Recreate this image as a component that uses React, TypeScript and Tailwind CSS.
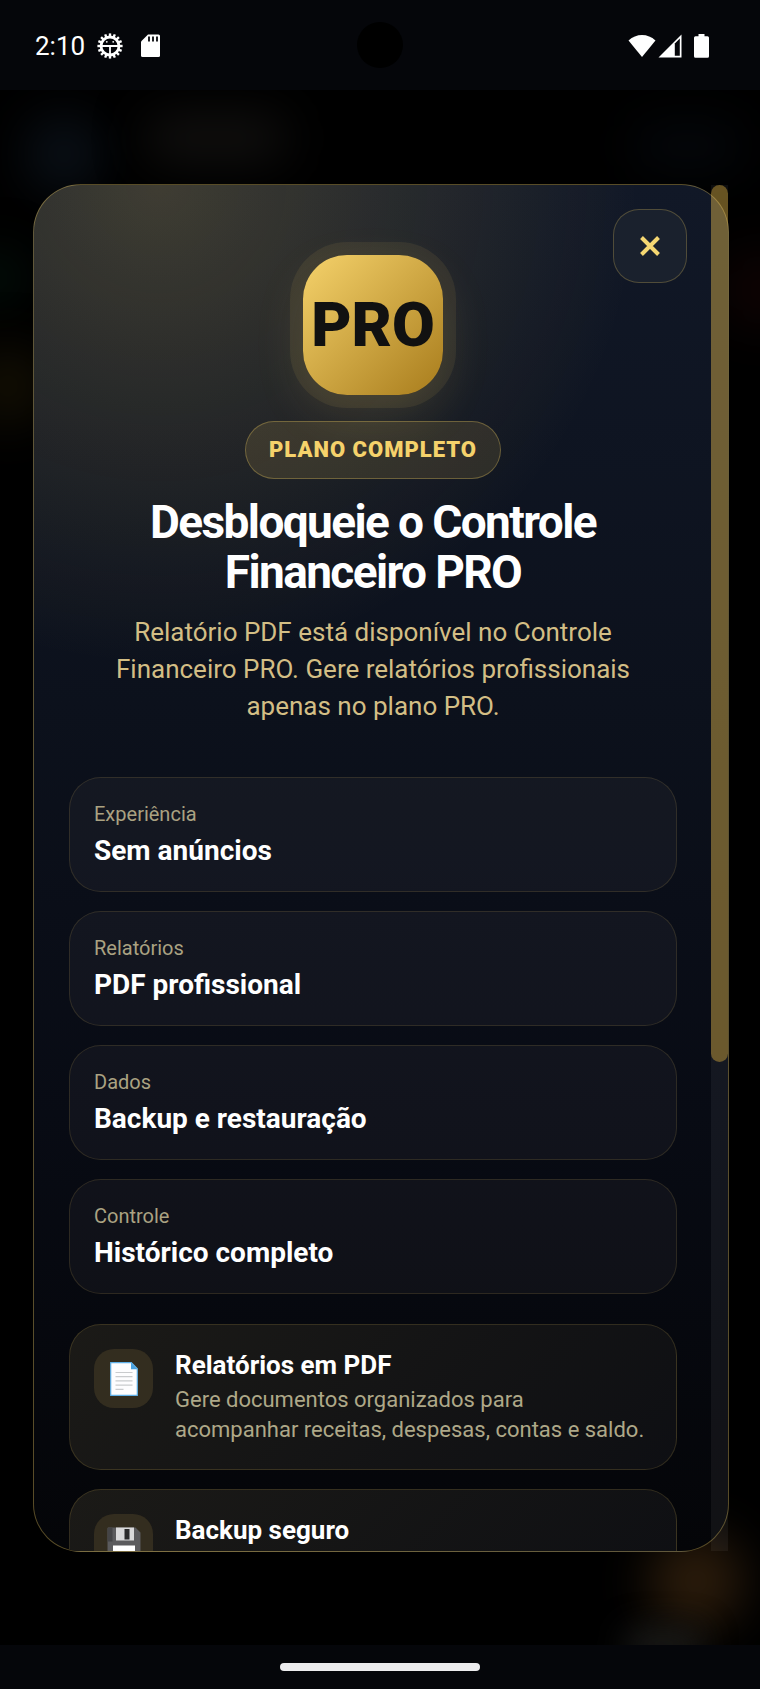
import * as React from "react"

type Stat = { label: string; value: string }

type Feature = {
  title: string
  description?: string
  icon: React.ReactNode
}

const STATS: Stat[] = [
  { label: "Experiência", value: "Sem anúncios" },
  { label: "Relatórios", value: "PDF profissional" },
  { label: "Dados", value: "Backup e restauração" },
  { label: "Controle", value: "Histórico completo" },
]

function PageIcon() {
  return (
    <svg viewBox="0 0 28 34" className="h-[34px] w-7" aria-hidden="true">
      <path d="M.7.7h20.6l6 6v26.6H.7z" fill="#fdfdfe" stroke="#5fb0e8" strokeWidth="1.2" />
      <path d="M21 .6l6.5 6.6H21z" fill="#4aa3e0" />
      <path d="M5.5 10.5h17M5.5 14.7h17M5.5 18.9h17M5.5 23.1h17M5.5 27.3h8" stroke="#c9cbcd" strokeWidth="1.2" />
    </svg>
  )
}

function FloppyIcon() {
  return (
    <svg viewBox="0 0 34 34" className="h-[34px] w-[34px]" aria-hidden="true">
      <path d="M1.5.5h27l5 5v26a2 2 0 0 1-2 2h-30a1 1 0 0 1-1-1v-31a1 1 0 0 1 1-1z" fill="#5b5b5d" />
      <path d="M1.5.5h4v14h-5v-13a1 1 0 0 1 1-1z" fill="#444446" />
      <path d="M9 .5h18v13H9z" fill="#d9d9da" />
      <path d="M17.5 2h5v10.5h-5z" fill="#2b2b2c" />
      <path d="M6 18.5h22v15H6z" fill="#fff" />
      <path d="M8.5 28h17" stroke="#c9cbcd" strokeWidth="1.2" />
    </svg>
  )
}

const FEATURES: Feature[] = [
  {
    title: "Relatórios em PDF",
    description: "Gere documentos organizados para acompanhar receitas, despesas, contas e saldo.",
    icon: <PageIcon />,
  },
  {
    title: "Backup seguro",
    icon: <FloppyIcon />,
  },
]

const GEAR_TEETH = Array.from({ length: 16 }, (_, i) => i * 22.5)

function StatusBar() {
  return (
    <header className="relative flex h-[90px] shrink-0 items-center justify-between bg-[#05060a] pt-px pr-[51px] pl-[35px] text-white">
      <div className="flex items-center">
        <span className="text-[26px] leading-8">2:10</span>
        <svg viewBox="0 0 26 26" className="ml-3 size-[26px]" fill="none" stroke="#fff" aria-hidden="true">
          {GEAR_TEETH.map((angle) => (
            <path key={angle} d="M13 .4v3.4" strokeWidth="2.4" transform={`rotate(${angle} 13 13)`} />
          ))}
          <circle cx="13" cy="13" r="9" strokeWidth="2.8" />
          <path d="M4 13h18M13 13v9.5" strokeWidth="1.8" />
          <circle cx="9.8" cy="8.8" r=".9" fill="#fff" stroke="none" />
          <circle cx="16.2" cy="8.8" r=".9" fill="#fff" stroke="none" />
        </svg>
        <svg viewBox="0 0 19 24" className="ml-[18px] h-6 w-[19px]" aria-hidden="true">
          <path d="M7 .5h10.5A1.5 1.5 0 0 1 19 2v19.5a1.5 1.5 0 0 1-1.5 1.5h-16A1.5 1.5 0 0 1 0 21.5v-14z" fill="#fff" />
          <path d="M8 2.5v5M12 2.5v5M16 2.5v5" stroke="#05060a" strokeWidth="1.8" />
        </svg>
      </div>

      {/* Front camera cutout */}
      <span className="absolute top-[22px] left-1/2 size-[46px] -translate-x-1/2 rounded-full bg-black" />

      <div className="flex items-center">
        <svg viewBox="0 0 28 24" className="h-6 w-7" aria-hidden="true">
          <path d="M.5 6.5C4.5 2.7 9 .9 14 .9s9.5 1.8 13.5 5.6L14 23z" fill="#fff" />
        </svg>
        <svg viewBox="0 0 24 24" className="ml-[2px] size-6" aria-hidden="true">
          <path d="M23.5.5v23H.5z" fill="#fff" />
          <path d="M16.8 9.5l5-5v17.300h-5z" fill="#05060a" />
        </svg>
        <svg viewBox="0 0 15 24" className="ml-3 h-6 w-[15px]" aria-hidden="true">
          <path d="M4.5 0h6v2.2h3A1.5 1.5 0 0 1 15 3.7v18.6a1.5 1.5 0 0 1-1.5 1.5h-12A1.5 1.5 0 0 1 0 22.3V3.7a1.5 1.5 0 0 1 1.5-1.5h3z" fill="#fff" />
        </svg>
      </div>
    </header>
  )
}

// Dimmed, blurred remains of the screen behind the dialog
function Backdrop() {
  return (
    <div className="absolute inset-0 overflow-hidden" aria-hidden="true">
      <div className="absolute top-6 left-6 size-20 rounded-full bg-[#090f16] blur-xl" />
      <div className="absolute top-6 left-36 h-12 w-36 rounded-full bg-[#11100f] blur-xl" />
      <div className="absolute top-8 right-4 h-12 w-28 rounded-full bg-[#04070b] blur-xl" />
      <div className="absolute top-40 -left-8 size-14 rounded-full bg-[#03100a] blur-xl" />
      <div className="absolute top-64 -left-8 size-20 rounded-full bg-[#120e03] blur-xl" />
      <div className="absolute top-40 -right-10 size-20 rounded-full bg-[#0e0303] blur-xl" />
      <div className="absolute right-4 bottom-4 size-24 rounded-full bg-[#2a1b0b] blur-xl" />
      <div className="absolute right-14 -bottom-4 h-8 w-20 rounded-full bg-[#1c1c1a] blur-lg" />
    </div>
  )
}

function StatCard({ label, value }: Stat) {
  return (
    <li className="flex flex-col gap-2 rounded-[32px] border border-[#f5d061]/13 bg-[#ffe9f0]/4 p-6">
      <span className="text-[20px] leading-6 text-[#aaa282]">{label}</span>
      <strong className="text-[28px] leading-[33px] font-bold text-white">{value}</strong>
    </li>
  )
}

function FeatureCard({ title, description, icon }: Feature) {
  return (
    <li className="flex items-start gap-[22px] rounded-[32px] border border-[#f5d061]/15 bg-linear-[135deg,#1b1a17,#0e0f13] p-6">
      <span className="flex size-[59px] shrink-0 items-center justify-center rounded-[20px] bg-[#332d1f]">{icon}</span>
      <div className="flex flex-col gap-1 pr-1">
        <h3 className="text-[26px] leading-8 font-bold text-white">{title}</h3>
        {description ? <p className="text-[22px] leading-[30px] text-[#aea888]">{description}</p> : null}
      </div>
    </li>
  )
}

export default function App() {
  const [open, setOpen] = React.useState(true)

  return (
    <div className="flex h-screen flex-col overflow-hidden bg-black font-['Roboto',sans-serif]">
      <StatusBar />

      <main className="relative flex min-h-0 flex-1 flex-col pt-[94px] pr-[31px] pb-[93px] pl-[33px]">
        <Backdrop />

        {open ? (
          <div role="dialog" aria-labelledby="pro-title" className="relative min-h-0 flex-1">
            <div className="h-full overflow-hidden rounded-[48px] border border-[#f5d061]/35 bg-[radial-gradient(circle_at_18%_0%,rgba(245,208,97,0.2),transparent_480px),linear-gradient(180deg,#111827_0%,#0c111c_38%,#080b14_68%,#040508_100%)] pt-[70px] pr-[51px] pl-[35px]">
              <div className="flex flex-col items-center text-center">
                <div className="flex size-[140px] items-center justify-center rounded-[44px] bg-linear-[135deg,#f5d26b,#a87c1c] text-[62px] leading-none font-black text-[#111111] shadow-[0_0_0_13px_rgba(245,208,97,0.08),0_18px_50px_rgba(245,208,97,0.14)]">
                  PRO
                </div>
                <span className="mt-[26px] rounded-[30px] border border-[#f5d061]/30 bg-[#f5d061]/12 px-[23px] py-[14px] text-[22px] leading-[28px] font-black tracking-[1px] text-[#f5d26b]">
                  PLANO COMPLETO
                </span>
                <h1 id="pro-title" className="mt-[18px] text-[46px] leading-[50px] font-bold tracking-[-0.035em] text-white">
                  Desbloqueie o Controle Financeiro PRO
                </h1>
                <p className="mt-[17px] max-w-[540px] text-[26px] leading-[37px] text-[#d3be85]">
                  Relatório PDF está disponível no Controle Financeiro PRO. Gere relatórios profissionais apenas no plano PRO.
                </p>
              </div>

              <ul className="mt-[52px] flex flex-col gap-[19px]">
                {STATS.map((stat) => (
                  <StatCard key={stat.label} {...stat} />
                ))}
              </ul>

              <ul className="mt-[30px] flex flex-col gap-[19px]">
                {FEATURES.map((feature) => (
                  <FeatureCard key={feature.title} {...feature} />
                ))}
              </ul>
            </div>

            <button
              type="button"
              aria-label="Fechar"
              onClick={() => setOpen(false)}
              className="absolute top-[25px] right-[42px] flex size-[74px] items-center justify-center rounded-[26px] border border-[#f5d061]/25 bg-[#1a212d]"
            >
              <svg viewBox="0 0 20 20" className="size-5" stroke="#f5d772" strokeWidth="4" aria-hidden="true">
                <path d="M1.5 1.5l17 17M18.5 1.5l-17 17" />
              </svg>
            </button>

            {/* Scroll track */}
            <div className="absolute inset-y-px right-px w-[17px] bg-white/5" aria-hidden="true">
              <div className="h-[64.2%] rounded-full bg-[#eebc40]/40" />
            </div>
          </div>
        ) : null}
      </main>

      <footer className="flex h-11 shrink-0 items-center justify-center bg-[#05060a]">
        <span className="h-2 w-[200px] rounded-full bg-[#ececee]" />
      </footer>
    </div>
  )
}
